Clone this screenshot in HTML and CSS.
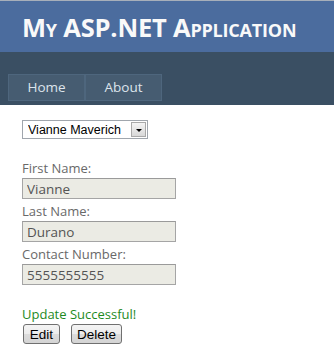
FILE: index.html
```html
<!DOCTYPE html>
<html lang="en">
<head>
  <meta charset="UTF-8" />
  <title>My ASP.NET Application</title>
  <link rel="stylesheet" href="styles.css">
</head>
<body>
  <div class="page">
    <div class="header">
      <h1>My ASP.NET Application</h1>
    </div>
    <div class="nav">
      <ul class="menu">
        <li><a href="#">Home</a></li>
        <li><a href="#">About</a></li>
      </ul>
    </div>
    <div class="main">
      <div class="picker">
        <select class="picker-select">
          <option>Vianne Maverich</option>
        </select>
        <span class="picker-arrow"></span>
      </div>
      <div class="fields">
        <label class="field-label">First Name:</label>
        <input class="field-input" type="text" value="Vianne" disabled />
        <label class="field-label">Last Name:</label>
        <input class="field-input" type="text" value="Durano" disabled />
        <label class="field-label">Contact Number:</label>
        <input class="field-input" type="text" value="5555555555" disabled />
      </div>
      <div class="status">Update Successful!</div>
      <div class="actions">
        <button class="btn">Edit</button>
        <button class="btn">Delete</button>
      </div>
    </div>
  </div>
</body>
</html>
```

FILE: styles.css
```css
* { box-sizing: border-box; }
body {
  margin: 0;
  font-family: 'Open Sans', sans-serif;
  font-size: 13px;
  color: #696969;
  background: #fff;
}
.page {
  border-top: 1px solid #a7afba;
}
.header {
  background: #4b6c9e;
  height: 51px;
}
.header h1 {
  margin: 0;
  padding-left: 22px;
  line-height: 53px;
  font-size: 25.5px;
  font-weight: 700;
  font-variant: small-caps;
  letter-spacing: -0.2px;
  color: #f9f9f9;
}
.nav {
  background: #3a4f63;
  padding: 22px 0 4px 8px;
}
.menu {
  list-style: none;
  margin: 0;
  padding: 0;
  display: flex;
}
.menu a {
  display: block;
  background: #465c71;
  border: 1px solid #4e667d;
  color: #dde4ec;
  text-decoration: none;
  font-size: 13.5px;
  line-height: 17px;
  padding: 4px 0;
  width: 77px;
  text-align: center;
}
.main {
  padding: 15px 0 0 22px;
}
.picker {
  display: flex;
  width: 126px;
  height: 19px;
  border: 1px solid #a0a6ad;
  background: #fff;
}
.picker-select {
  appearance: none;
  -webkit-appearance: none;
  border: none;
  outline: none;
  background: transparent;
  flex: 1;
  min-width: 0;
  padding: 0 0 0 5px;
  font-family: 'Liberation Sans', Arial, sans-serif;
  font-size: 12.5px;
  color: #000;
}
.picker-arrow {
  width: 15px;
  height: 15px;
  margin: 1px 1px 1px 0;
  border: 1px solid #a9a9a9;
  background: linear-gradient(#f4f4f4, #d8d8d8);
  display: flex;
  align-items: center;
  justify-content: center;
}
.picker-arrow::after {
  content: "";
  border-left: 3px solid transparent;
  border-right: 3px solid transparent;
  border-top: 3px solid #000;
  margin-top: 1px;
}
.fields {
  display: flex;
  flex-direction: column;
  align-items: flex-start;
  margin-top: 19px;
}
.field-label {
  line-height: 20px;
}
.field-input {
  width: 154px;
  height: 21px;
  margin-bottom: 2px;
  border: 1px solid #a5a5a5;
  border-top-color: #9a9a9a;
  background: #ebebe4;
  color: #545454;
  font-family: 'Open Sans', sans-serif;
  font-size: 13.5px;
  padding: 0 4px;
}
.status {
  margin-top: 17px;
  line-height: 20px;
  color: #1e8a1e;
}
.actions {
  display: flex;
  gap: 11px;
  padding-left: 1px;
}
.btn {
  height: 20px;
  padding: 0 5px;
  min-width: 37px;
  font-family: 'Liberation Sans', Arial, sans-serif;
  font-size: 13.5px;
  color: #000;
  border: 1px solid #707070;
  border-radius: 3px;
  background: linear-gradient(#f4f4f4 0%, #ececec 50%, #dcdcdc 51%, #d4d4d4 100%);
}
```
